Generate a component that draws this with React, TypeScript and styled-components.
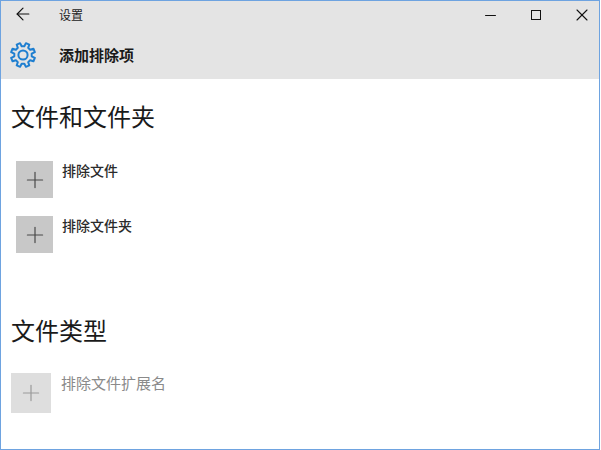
import React from 'react';
import styled, { createGlobalStyle } from 'styled-components';
import { ArrowLeft, Minus, X, Plus } from 'lucide-react';

const GlobalStyle = createGlobalStyle`
    html, body { margin: 0; padding: 0; background: #fff; }
    body { font-family: "Noto Sans CJK SC", "Liberation Sans", sans-serif; }
`

const Window = styled.div`
    width: 600px;
    height: 450px;
    box-sizing: border-box;
    overflow: hidden;
    background: #fff;
    border: 1px solid #6ea3e0;
`

const Header = styled.div`
    background: #e4e4e4;
    height: 78px;
    display: flex;
    flex-direction: column;
`

const TitleBar = styled.div`
    height: 28px;
    display: flex;
    align-items: center;
    color: #111;
`

const BackButton = styled.div`
    width: 46px;
    padding: 0 0 2px 12px;
    display: flex;
    align-items: center;
`

const WindowTitle = styled.div`
    font-size: 12px;
    padding-bottom: 2px;
    color: #222;
`

const Controls = styled.div`
    margin-left: auto;
    display: flex;
    align-items: center;
    gap: 12px;
`

const ControlButton = styled.div`
    width: 34px;
    height: 20px;
    display: flex;
    align-items: center;
    justify-content: center;
`

const MaximizeGlyph = styled.div`
    width: 10px;
    height: 10px;
    box-sizing: border-box;
    border: 1px solid #111;
`

const PageBar = styled.div`
    flex: 1;
    display: flex;
    align-items: center;
    gap: 23px;
    padding: 2px 0 0 9px;
`

const PageTitle = styled.div`
    font-size: 15px;
    font-weight: 700;
    padding-bottom: 2px;
    color: #1a1a1a;
`

const Content = styled.div`
    padding: 20px 0 0 10px;
    display: flex;
    flex-direction: column;
`

const SectionTitle = styled.h2`
    margin: 0;
    font-size: 24px;
    font-weight: 400;
    line-height: 34px;
    color: #1a1a1a;
`

const ItemList = styled.div<{ $top: number }>`
    display: flex;
    flex-direction: column;
    gap: 18px;
    margin-top: ${p => p.$top}px;
`

const Item = styled.div<{ $disabled?: boolean; $indent: number }>`
    display: flex;
    align-items: flex-start;
    gap: ${p => (p.$disabled ? 10 : 9)}px;
    padding-left: ${p => p.$indent}px;
    color: ${p => (p.$disabled ? '#8a8a8a' : '#2b2b2b')};
`

const AddTile = styled.div<{ $disabled?: boolean }>`
    width: ${p => (p.$disabled ? 40 : 37)}px;
    height: ${p => (p.$disabled ? 40 : 37)}px;
    display: flex;
    align-items: center;
    justify-content: center;
    background: ${p => (p.$disabled ? '#dedede' : '#c8c8c8')};
    color: ${p => (p.$disabled ? '#999' : '#484848')};
`

const ItemLabel = styled.div<{ $disabled?: boolean }>`
    font-size: ${p => (p.$disabled ? 15 : 14)}px;
    font-weight: ${p => (p.$disabled ? 400 : 500)};
    line-height: 18px;
    margin-top: ${p => (p.$disabled ? 1 : 0)}px;
`

const Spacer = styled.div`
    height: 60px;
`

// eight toothed cog, outline built once from polar points
const gearPath = () => {
    const cx = 13, cy = 13, outer = 12.2, inner = 8.8;
    const teeth = 8;
    const pts: string[] = [];
    for (let i = 0; i < teeth; i++) {
        const a = (i * 2 * Math.PI) / teeth + Math.PI / 8;
        const at = (r: number, d: number) => {
            const x = cx + r * Math.cos(a + d);
            const y = cy + r * Math.sin(a + d);
            return `${x.toFixed(2)} ${y.toFixed(2)}`;
        };
        pts.push(at(inner, -0.24), at(outer, -0.15), at(outer, 0.15), at(inner, 0.24));
    }
    return `M${pts.join('L')}Z`;
};

const GearIcon = () => (
    <svg width="26" height="26" viewBox="0 0 26 26" fill="none" stroke="#1f7fd0" strokeWidth="2" strokeLinejoin="round">
        <path d={gearPath()} />
        <circle cx="13" cy="13" r="4.6" />
    </svg>
);

const App = () => {
    return (
        <>
            <GlobalStyle />
            <Window>
                <Header>
                    <TitleBar>
                        <BackButton><ArrowLeft size={20} strokeWidth={1.4} /></BackButton>
                        <WindowTitle>设置</WindowTitle>
                        <Controls>
                            <ControlButton><Minus size={17} strokeWidth={1.5} /></ControlButton>
                            <ControlButton><MaximizeGlyph /></ControlButton>
                            <ControlButton><X size={20} strokeWidth={1.3} /></ControlButton>
                        </Controls>
                    </TitleBar>
                    <PageBar>
                        <GearIcon />
                        <PageTitle>添加排除项</PageTitle>
                    </PageBar>
                </Header>
                <Content>
                    <SectionTitle>文件和文件夹</SectionTitle>
                    <ItemList $top={28}>
                        <Item $indent={5}>
                            <AddTile><Plus size={26} strokeWidth={1.1} /></AddTile>
                            <ItemLabel>排除文件</ItemLabel>
                        </Item>
                        <Item $indent={5}>
                            <AddTile><Plus size={26} strokeWidth={1.1} /></AddTile>
                            <ItemLabel>排除文件夹</ItemLabel>
                        </Item>
                    </ItemList>
                    <Spacer />
                    <SectionTitle>文件类型</SectionTitle>
                    <ItemList $top={26}>
                        <Item $indent={0} $disabled>
                            <AddTile $disabled><Plus size={26} strokeWidth={1.1} /></AddTile>
                            <ItemLabel $disabled>排除文件扩展名</ItemLabel>
                        </Item>
                    </ItemList>
                </Content>
            </Window>
        </>
    )
};

export default App;
